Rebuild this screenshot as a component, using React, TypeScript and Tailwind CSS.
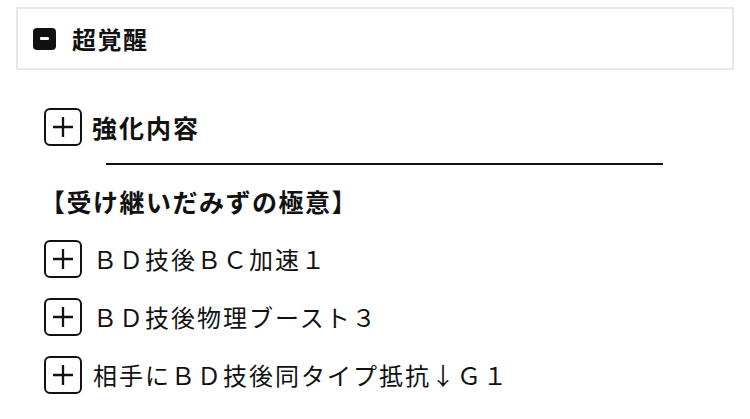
const jp = { fontFamily: '"Noto Sans CJK JP", "Noto Sans", sans-serif' };

function PlusBox() {
    return (
        <span className="w-[38px] h-[38px] shrink-0 border-2 border-[#111] rounded-[6px] flex items-center justify-center">
            <svg width="22" height="22" viewBox="0 0 22 22">
                <path d="M1 11h20M11 1v20" stroke="#111" strokeWidth="2.3" />
            </svg>
        </span>
    );
}

const effects = [
    'ＢＤ技後ＢＣ加速１',
    'ＢＤ技後物理ブースト３',
    '相手にＢＤ技後同タイプ抵抗↓Ｇ１',
];

export default function App() {
    return (
        <div className="min-h-screen bg-white px-4 pt-[7px] text-[#111]" style={jp}>
            <div className="h-[63px] border-2 border-[#e8e8e8] flex items-center pl-[15px] gap-4">
                <span className="w-[23px] h-[22px] bg-[#111] rounded-[4px] flex items-center justify-center">
                    <span className="w-[9px] h-[3px] bg-white rounded-[1px]" />
                </span>
                <span className="text-[24px] font-bold tracking-[1.5px] leading-none">超覚醒</span>
            </div>

            <div className="pl-[28px]">
                <div className="mt-[38px] flex items-center gap-[10px]">
                    <PlusBox />
                    <span className="text-[25px] font-bold tracking-[2px] leading-none">強化内容</span>
                </div>

                <div className="ml-[62px] mt-[17px] w-[557px] h-[2px] bg-[#111]" />

                <div className="mt-[21px] text-[25px] font-bold tracking-[1.5px] leading-[30px] -ml-[4px]">
                    【受け継いだみずの極意】
                </div>

                <div className="mt-[24px] flex flex-col gap-[20px]">
                    {effects.map((e) => (
                        <div key={e} className="flex items-center gap-[11px]">
                            <PlusBox />
                            <span className="text-[24px] tracking-[2px] leading-none">{e}</span>
                        </div>
                    ))}
                </div>
            </div>
        </div>
    );
}
